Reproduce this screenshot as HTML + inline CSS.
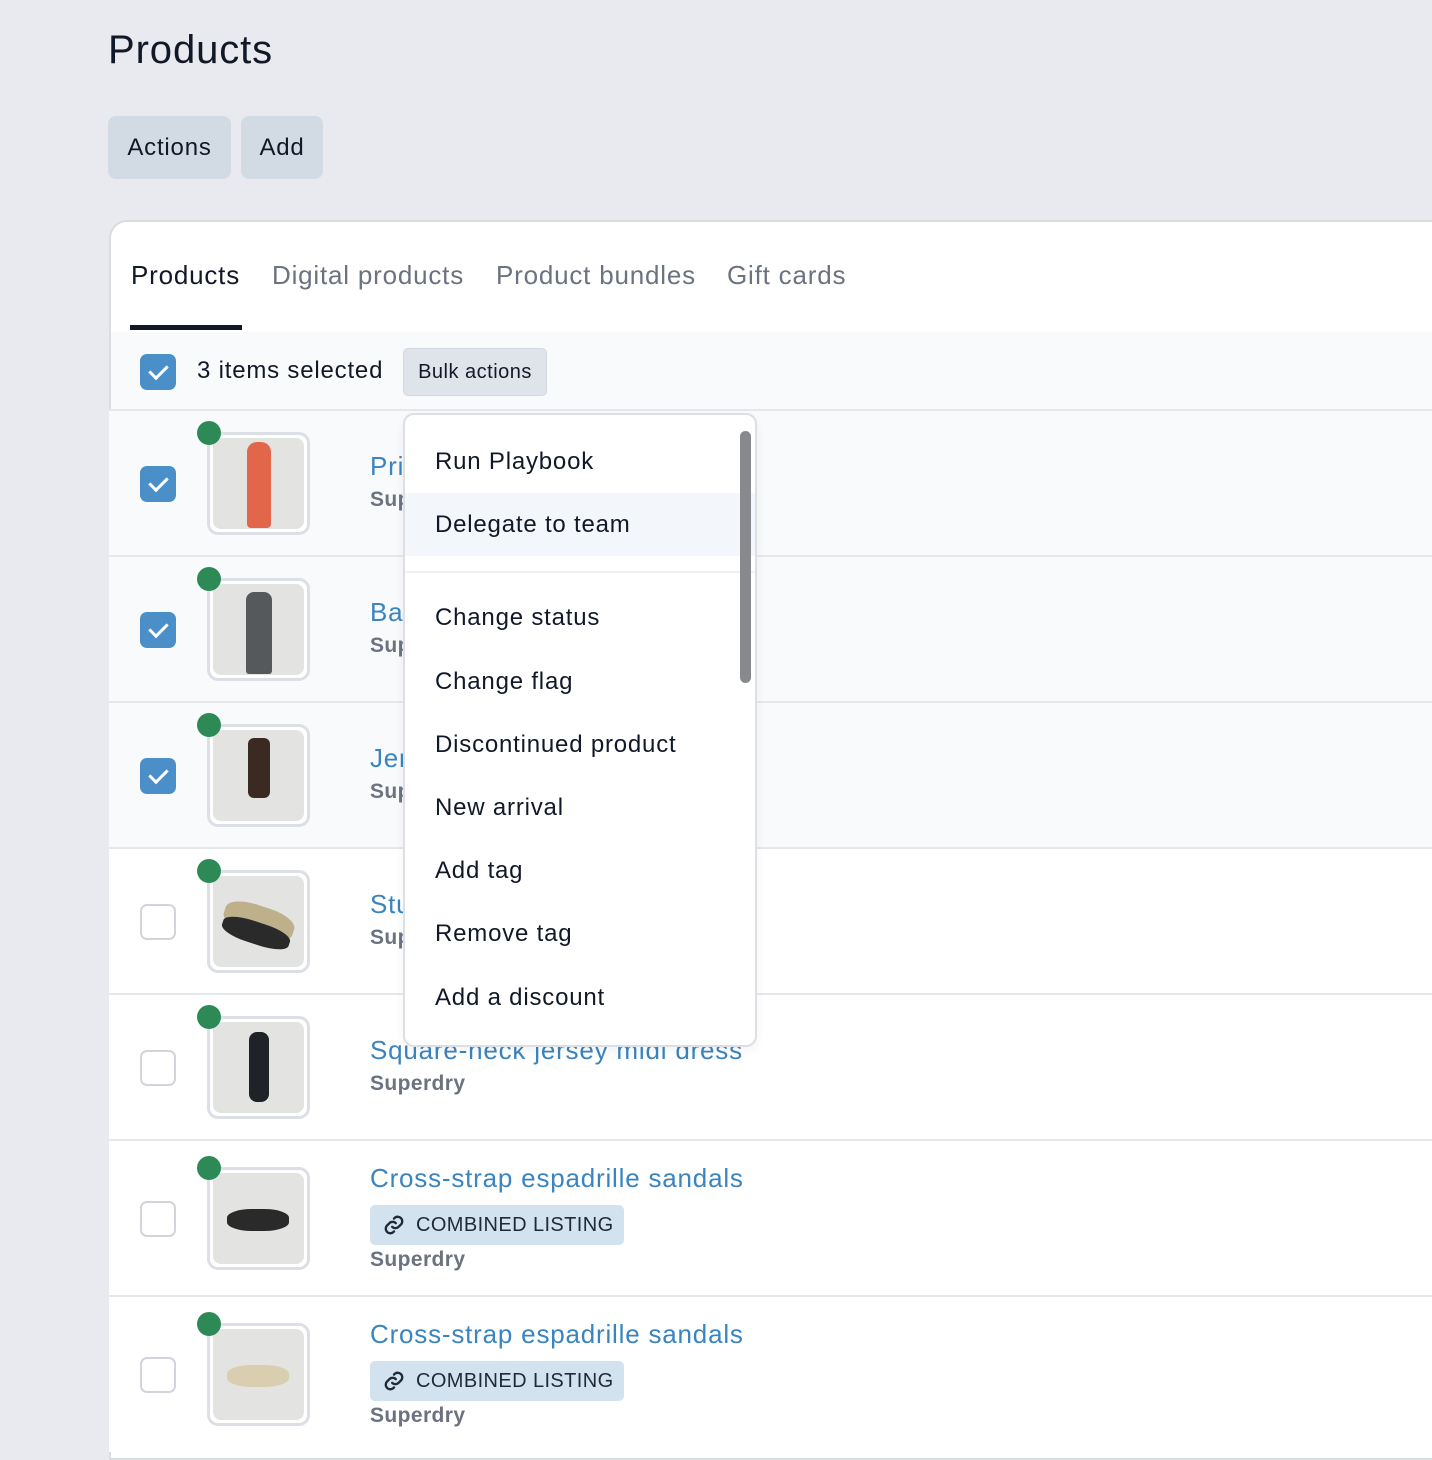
<!DOCTYPE html>
<html><head><meta charset="utf-8"><style>
*{box-sizing:border-box;margin:0;padding:0}
body{width:1432px;height:1434px;overflow:hidden;background:#e8eaef;font-family:"Liberation Sans",Arial,sans-serif;position:relative;color:#111827;letter-spacing:.8px}
.a{position:absolute}
h1{position:absolute;left:108px;top:28px;font-size:40px;font-weight:500;color:#111827;letter-spacing:.9px}
.btn{position:absolute;top:116px;height:63px;background:#d2dbe4;border-radius:8px;font-size:24px;line-height:63px;text-align:center;color:#111827}
.card{position:absolute;left:109px;top:220px;width:1340px;height:1240px;background:#fff;border-radius:18px 0 0 0;border:2px solid #d9dce1;border-right:none;overflow:hidden}
.tab{position:absolute;top:38px;font-size:26px;color:#6b7280}
.row{position:absolute;left:0;width:1340px;border-top:2px solid #e5e7eb}
.sel{background:#f9fafb}
.cb{position:absolute;left:31px;width:36px;height:36px;border-radius:7px}
.cb.on{background:#4a8fc7}
.cb.off{border:2px solid #d1d5db;background:#fff}
.cb.on:after{content:"";position:absolute;left:13px;top:7px;width:8px;height:15px;border:solid #fff;border-width:0 3px 3px 0;transform:rotate(45deg)}
.fr{position:absolute;left:98px;width:103px;height:103px;border:3px solid #dcdfe5;border-radius:11px;background:#fff;padding:3px}
.im{width:91px;height:91px;border-radius:8px;background:#e3e3e1;position:relative;overflow:hidden}
.dot{position:absolute;left:88px;width:24px;height:24px;border-radius:50%;background:#2d8a57}
.t{position:absolute;left:261px;font-size:26px;color:#3a84c0;white-space:nowrap}
.s{position:absolute;left:261px;font-size:21px;font-weight:700;color:#6b7280;letter-spacing:.4px}
.badge{position:absolute;left:261px;width:254px;height:40px;background:#d3e2ef;border-radius:5px;font-size:20px;line-height:40px;color:#1f2937;padding-left:46px;letter-spacing:.4px;white-space:nowrap}
.badge svg{position:absolute;left:12px;top:9px}
.menu{position:absolute;left:403px;top:413px;width:354px;height:634px;background:#fff;border:2px solid #dcdfe4;border-radius:11px;overflow:hidden;box-shadow:0 4px 10px rgba(0,0,0,.05)}
.mi{position:absolute;left:30px;font-size:24px;color:#111827}
</style></head><body>
<h1>Products</h1>
<div class="btn" style="left:108px;width:123px">Actions</div>
<div class="btn" style="left:241px;width:82px">Add</div>
<div class="card">
 <div class="tab" style="left:20px;color:#111827;font-weight:500">Products</div>
 <div class="tab" style="left:161px">Digital products</div>
 <div class="tab" style="left:385px">Product bundles</div>
 <div class="tab" style="left:616px">Gift cards</div>
 <div class="a" style="left:19px;top:103px;width:112px;height:5px;background:#111827"></div>
 <div class="a sel" style="left:0;top:110px;width:1340px;height:79px">
  <div class="cb on" style="top:22px;left:29px"></div>
  <div class="a" style="left:86px;top:25px;font-size:24px">3 items selected</div>
  <div class="a" style="left:292px;top:16px;width:144px;height:48px;background:#dfe3ea;border:1px solid #d3d8df;border-radius:5px;font-size:20px;line-height:46px;text-align:center;font-weight:500;letter-spacing:.5px">Bulk actions</div>
 </div>
</div>
<div class="a" style="left:109px;top:0;width:1323px;height:1434px;pointer-events:none">
 <div class="row sel" style="top:409px;height:147px"><div class="cb on" style="top:55px"></div><div class="fr" style="top:21px"><div class="im"><div class="a" style="left:34px;top:4px;width:24px;height:86px;background:#e2664a;border-radius:10px 10px 4px 4px"></div></div></div><div class="dot" style="top:10px"></div><div class="t" style="top:40px">Printed</div><div class="s" style="top:77px">Superdry</div></div>
 <div class="row sel" style="top:555px;height:147px"><div class="cb on" style="top:55px"></div><div class="fr" style="top:21px"><div class="im"><div class="a" style="left:33px;top:8px;width:26px;height:82px;background:#55595c;border-radius:8px 8px 3px 3px"></div></div></div><div class="dot" style="top:10px"></div><div class="t" style="top:40px">Bandeau</div><div class="s" style="top:77px">Superdry</div></div>
 <div class="row sel" style="top:701px;height:147px"><div class="cb on" style="top:55px"></div><div class="fr" style="top:21px"><div class="im"><div class="a" style="left:35px;top:8px;width:22px;height:60px;background:#3a2a22;border-radius:6px"></div></div></div><div class="dot" style="top:10px"></div><div class="t" style="top:40px">Jersey</div><div class="s" style="top:77px">Superdry</div></div>
 <div class="row" style="top:847px;height:147px;background:#fff"><div class="cb off" style="top:55px"></div><div class="fr" style="top:21px"><div class="im"><div class="a" style="left:10px;top:30px;width:72px;height:30px;background:#bdb08a;border-radius:40%;transform:rotate(18deg)"></div><div class="a" style="left:8px;top:46px;width:70px;height:22px;background:#2a2a2a;border-radius:40%;transform:rotate(18deg)"></div></div></div><div class="dot" style="top:10px"></div><div class="t" style="top:40px">Studio</div><div class="s" style="top:77px">Superdry</div></div>
 <div class="row" style="top:993px;height:147px;background:#fff"><div class="cb off" style="top:55px"></div><div class="fr" style="top:21px"><div class="im"><div class="a" style="left:36px;top:10px;width:20px;height:70px;background:#1f2226;border-radius:8px"></div></div></div><div class="dot" style="top:10px"></div><div class="t" style="top:40px">Square-neck jersey midi dress</div><div class="s" style="top:77px">Superdry</div></div>
 <div class="row" style="top:1139px;height:157px;background:#fff"><div class="cb off" style="top:60px"></div><div class="fr" style="top:26px"><div class="im"><div class="a" style="left:14px;top:36px;width:62px;height:22px;background:#2a2a2a;border-radius:40%"></div></div></div><div class="dot" style="top:15px"></div><div class="t" style="top:22px">Cross-strap espadrille sandals</div><div class="badge" style="top:64px"><svg width="24" height="22" viewBox="0 0 24 24" fill="none" stroke="#1f2937" stroke-width="2.6" stroke-linecap="round"><path d="M10 14a5 5 0 0 0 7 0l3-3a5 5 0 0 0-7-7l-1 1"/><path d="M14 10a5 5 0 0 0-7 0l-3 3a5 5 0 0 0 7 7l1-1"/></svg>COMBINED LISTING</div><div class="s" style="top:107px">Superdry</div></div>
 <div class="row" style="top:1295px;height:157px;background:#fff"><div class="cb off" style="top:60px"></div><div class="fr" style="top:26px"><div class="im"><div class="a" style="left:14px;top:36px;width:62px;height:22px;background:#d9ceb0;border-radius:40%"></div></div></div><div class="dot" style="top:15px"></div><div class="t" style="top:22px">Cross-strap espadrille sandals</div><div class="badge" style="top:64px"><svg width="24" height="22" viewBox="0 0 24 24" fill="none" stroke="#1f2937" stroke-width="2.6" stroke-linecap="round"><path d="M10 14a5 5 0 0 0 7 0l3-3a5 5 0 0 0-7-7l-1 1"/><path d="M14 10a5 5 0 0 0-7 0l-3 3a5 5 0 0 0 7 7l1-1"/></svg>COMBINED LISTING</div><div class="s" style="top:107px">Superdry</div></div>
</div>
<div class="menu">
 <div class="a" style="left:0;top:78px;width:354px;height:63px;background:#f3f6fa"></div>
 <div class="a" style="left:0;top:156px;width:354px;height:2px;background:#eef0f3"></div>
 <div class="a" style="left:335px;top:16px;width:11px;height:252px;border-radius:6px;background:#88898c"></div>
 <div class="mi" style="top:33px">Run Playbook</div>
 <div class="mi" style="top:96px">Delegate to team</div>
 <div class="mi" style="top:189px">Change status</div>
 <div class="mi" style="top:253px">Change flag</div>
 <div class="mi" style="top:316px">Discontinued product</div>
 <div class="mi" style="top:379px">New arrival</div>
 <div class="mi" style="top:442px">Add tag</div>
 <div class="mi" style="top:505px">Remove tag</div>
 <div class="mi" style="top:569px">Add a discount</div>
</div>
</body></html>
